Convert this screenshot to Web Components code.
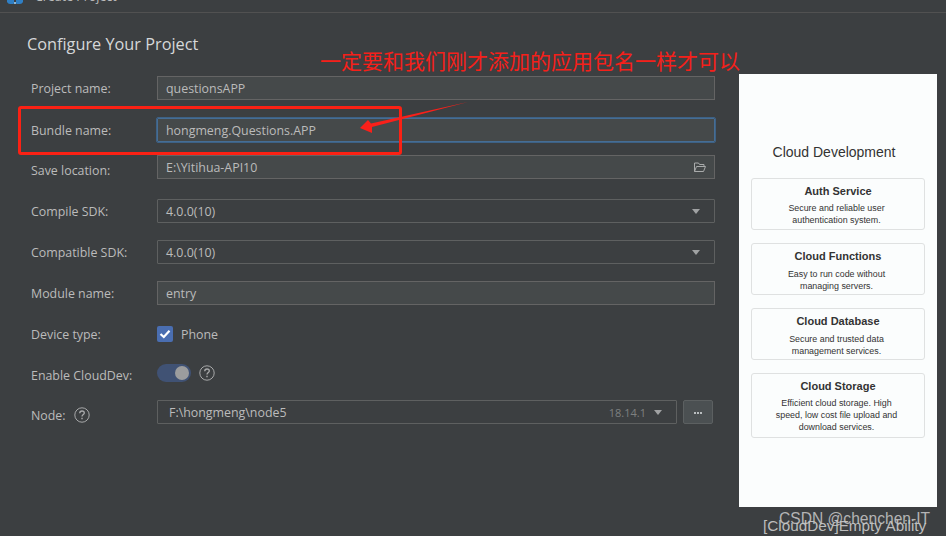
<!DOCTYPE html>
<html>
<head>
<meta charset="utf-8">
<title>Create Project</title>
<style>
  html, body { margin: 0; height: 100%; }
  body {
    width: 946px;
    height: 536px;
    overflow: hidden;
    background: #3c3f41;
    position: relative;
    font-family: "Open Sans", "Noto Sans", sans-serif;
    color: #bbbbbb;
  }
</style>
</head>
<body>
<project-dialog>
  <config-row label="Project name:" top="0"><config-field>questionsAPP</config-field></config-row>
  <config-row label="Bundle name:" top="18"><config-field focused>hongmeng.Questions.APP</config-field></config-row>
  <config-row label="Save location:" top="13" drop="6"><config-field>E:\Yitihua-API10<folder-icon slot="end"></folder-icon></config-field></config-row>
  <config-row label="Compile SDK:" top="20"><config-select>4.0.0(10)</config-select></config-row>
  <config-row label="Compatible SDK:" top="17"><config-select>4.0.0(10)</config-select></config-row>
  <config-row label="Module name:" top="17"><config-field>entry</config-field></config-row>
  <config-row label="Device type:" top="17"><config-check>Phone</config-check></config-row>
  <config-row label="Enable CloudDev:" top="15" drop="4"><config-toggle></config-toggle><help-icon style="margin-left:8px"></help-icon></config-row>
  <config-row label="Node:" top="15" drop="6" help>
    <config-select inset>F:\hongmeng\node5<span slot="end">18.14.1</span></config-select>
    <more-button></more-button>
  </config-row>
  <cloud-preview slot="side" title="Cloud Development" caption="[CloudDev]Empty Ability">
    <cloud-card name="Auth Service">Secure and reliable user<br>authentication system.</cloud-card>
    <cloud-card name="Cloud Functions" style="--desc-gap:5px">Easy to run code without<br>managing servers.</cloud-card>
    <cloud-card name="Cloud Database" style="--desc-gap:5px">Secure and trusted data<br>management services.</cloud-card>
    <cloud-card name="Cloud Storage" style="min-height:65px">Efficient cloud storage. High<br>speed, low cost file upload and<br>download services.</cloud-card>
  </cloud-preview>
</project-dialog>
<red-annotation></red-annotation>

<script>
class ProjectDialog extends HTMLElement {
  constructor() {
    super();
    this.attachShadow({ mode: 'open' });
    this.shadowRoot.innerHTML = `
      <style>
        :host { display: block; height: 536px; overflow: hidden; }
        .bar {
          height: 12px;
          border-bottom: 1px solid #515151;
          display: flex;
          align-items: flex-end;
          gap: 12px;
          padding-left: 7px;
          overflow: hidden;
          font-size: 12.4px;
          line-height: 18px;
        }
        .bar span { flex: none; transform: translateY(-6px); }
        .bar svg { flex: none; transform: translateY(-8px); }
        .main { display: flex; align-items: flex-start; }
        .form { width: 739px; flex: none; padding: 20px 0 0 27px; box-sizing: border-box; }
        h1 {
          margin: 0 0 20px;
          font-size: 16.3px;
          line-height: 23px;
          font-weight: 400;
          color: #d6d8d9;
        }
        .rows { padding-left: 4px; }
        .side { flex: none; margin-top: 61px; }
      </style>
      <div class="bar">
        <svg width="16" height="4" viewBox="0 0 16 4">
          <path d="M0 0 H7 V3 Q7 4 6 4 H3 Q1 4 0 2Z" fill="#2f7fc4"/>
          <path d="M9 0 H16 V2 Q15 4 13 4 H10 Q9 4 9 3Z" fill="#2f7fc4"/>
          <path d="M7 2 H9 V4 H7Z" fill="#8fb8d8"/>
        </svg>
        <span>Create Project</span>
      </div>
      <div class="main">
        <div class="form">
          <h1>Configure Your Project</h1>
          <div class="rows"><slot></slot></div>
        </div>
        <div class="side"><slot name="side"></slot></div>
      </div>`;
  }
}

class ConfigRow extends HTMLElement {
  constructor() {
    super();
    this.attachShadow({ mode: 'open' });
  }
  connectedCallback() {
    const help = this.hasAttribute('help') ? '<help-icon></help-icon>' : '';
    this.style.marginTop = (this.getAttribute('top') || 0) + 'px';
    // drop pushes the label down a little, the reference labels don't all sit on the field centre
    const drop = this.getAttribute('drop') || 0;
    this.shadowRoot.innerHTML = `
      <style>
        :host { display: flex; align-items: center; height: 24px; font-size: 12.4px; }
        .label {
          width: 126px;
          flex: none;
          display: flex;
          align-items: center;
          gap: 8px;
          padding-top: ${drop}px;
          color: #bbbbbb;
          white-space: nowrap;
        }
        .control { display: flex; align-items: center; width: 558px; }
        ::slotted(config-field), ::slotted(config-select) { flex: 1; }
      </style>
      <div class="label">${this.getAttribute('label')}${help}</div>
      <div class="control"><slot></slot></div>`;
  }
}

class ConfigField extends HTMLElement {
  constructor() {
    super();
    this.attachShadow({ mode: 'open' });
    this.shadowRoot.innerHTML = `
      <style>
        :host {
          display: flex;
          align-items: center;
          height: 24px;
          box-sizing: border-box;
          padding: 0 8px;
          background: #45494a;
          border: 1px solid #646464;
          font-size: 12.4px;
          color: #bbbbbb;
        }
        :host([focused]) {
          border-color: #466d94;
          outline: 1px solid #3d6185;
          outline-offset: 0;
          border-radius: 1px;
        }
        .text { flex: 1; }
      </style>
      <span class="text"><slot></slot></span><slot name="end"></slot>`;
  }
}

class ConfigSelect extends HTMLElement {
  constructor() {
    super();
    this.attachShadow({ mode: 'open' });
    this.shadowRoot.innerHTML = `
      <style>
        :host {
          display: flex;
          align-items: center;
          height: 24px;
          box-sizing: border-box;
          padding: 0 14px 0 8px;
          border: 1px solid #5e6060;
          border-radius: 1px;
          font-size: 12.4px;
          color: #bbbbbb;
        }
        :host([inset]) { padding-left: 11px; }
        .text { flex: 1; }
        .end { color: #7e8080; font-size: 11px; margin-right: 8px; }
        svg { flex: none; }
      </style>
      <span class="text"><slot></slot></span>
      <span class="end"><slot name="end"></slot></span>
      <svg width="8" height="5" viewBox="0 0 8 5"><path d="M0 0H8L4 5Z" fill="#a0a2a3"/></svg>`;
  }
}

class ConfigCheck extends HTMLElement {
  constructor() {
    super();
    this.attachShadow({ mode: 'open' });
    this.shadowRoot.innerHTML = `
      <style>
        :host { display: flex; align-items: center; gap: 8px; font-size: 12.4px; color: #bbbbbb; }
        .box { width: 16px; height: 16px; border-radius: 2px; background: #4a6eb1; display: flex; }
      </style>
      <span class="box">
        <svg width="16" height="16" viewBox="0 0 16 16"><path d="M3.5 8 L6.8 11 L12.5 4.8" fill="none" stroke="#fff" stroke-width="2.2"/></svg>
      </span>
      <span><slot></slot></span>`;
  }
}

class ConfigToggle extends HTMLElement {
  constructor() {
    super();
    this.attachShadow({ mode: 'open' });
    this.shadowRoot.innerHTML = `
      <style>
        :host {
          display: flex;
          align-items: center;
          justify-content: flex-end;
          width: 34px;
          height: 18px;
          box-sizing: border-box;
          padding-right: 2px;
          border-radius: 9px;
          background: #405274;
        }
        i { width: 14px; height: 14px; border-radius: 50%; background: #9c9d9e; }
      </style>
      <i></i>`;
  }
}

class HelpIcon extends HTMLElement {
  constructor() {
    super();
    this.attachShadow({ mode: 'open' });
    this.shadowRoot.innerHTML = `
      <style>
        :host { display: inline-flex; width: 16px; height: 16px; flex: none; }
      </style>
      <svg width="16" height="16" viewBox="0 0 16 16" fill="none" stroke="#a8a9aa">
        <circle cx="8" cy="8" r="7.2"/>
        <path d="M5.7 6.2 C5.8 4.6 7 4 8 4 C9.3 4 10.3 4.8 10.3 6 C10.3 7.5 8 7.6 8 9.6" stroke-width="1.3"/>
        <path d="M8 10.8 V12.2" stroke-width="1.4"/>
      </svg>`;
  }
}

class FolderIcon extends HTMLElement {
  constructor() {
    super();
    this.attachShadow({ mode: 'open' });
    this.shadowRoot.innerHTML = `
      <style>:host { display: inline-flex; width: 12px; height: 11px; }</style>
      <svg width="12" height="11" viewBox="0 0 12 11" fill="none" stroke="#a9abab">
        <path d="M.5 9.5 V1 H4.5 L5.5 2.5 H10 V4"/>
        <path d="M.5 9.5 H9.5 L11.5 4.5 H2.5 L.5 9.5Z"/>
      </svg>`;
  }
}

class MoreButton extends HTMLElement {
  constructor() {
    super();
    this.attachShadow({ mode: 'open' });
    this.shadowRoot.innerHTML = `
      <style>
        :host {
          display: flex;
          align-items: center;
          justify-content: center;
          flex: none;
          width: 30px;
          height: 24px;
          margin: 0 2px 0 6px;
          box-sizing: border-box;
          background: #4b5052;
          border: 1px solid #5c6061;
          border-radius: 2px;
        }
        svg { display: block; transform: translateY(1px); }
      </style>
      <svg width="8" height="2" viewBox="0 0 8 2" fill="#b9bdbf"><rect width="2" height="2"/><rect x="3" width="2" height="2"/><rect x="6" width="2" height="2"/></svg>`;
  }
}

class CloudPreview extends HTMLElement {
  constructor() {
    super();
    this.attachShadow({ mode: 'open' });
  }
  connectedCallback() {
    this.shadowRoot.innerHTML = `
      <style>
        :host { display: block; width: 198px; font-family: "Liberation Sans", Arial, sans-serif; }
        .panel {
          height: 433px;
          box-sizing: border-box;
          background: #fbfdfd;
          padding: 70px 12px 0;
          display: flex;
          flex-direction: column;
        }
        h2 {
          margin: 0 0 17px -8px;
          width: 182px;
          font-size: 14px;
          line-height: 17px;
          font-weight: 400;
          text-align: center;
          color: #333;
        }
        .cards { display: flex; flex-direction: column; gap: 13px; }
        .caption {
          margin-top: 10px;
          padding-left: 24px;
          font-size: 15.3px;
          line-height: 17px;
          color: #bdbdbd;
          white-space: nowrap;
        }
      </style>
      <div class="panel">
        <h2>${this.getAttribute('title')}</h2>
        <div class="cards"><slot></slot></div>
      </div>
      <div class="caption">${this.getAttribute('caption')}</div>`;
  }
}

class CloudCard extends HTMLElement {
  constructor() {
    super();
    this.attachShadow({ mode: 'open' });
  }
  connectedCallback() {
    this.shadowRoot.innerHTML = `
      <style>
        :host {
          display: block;
          width: 174px;
          min-height: 52px;
          box-sizing: border-box;
          padding: 5px 4px 0;
          border: 1px solid #dfe1e1;
          border-radius: 3px;
          text-align: center;
          color: #333;
        }
        b { display: block; font-size: 11px; line-height: 14px; margin-bottom: var(--desc-gap, 4px); }
        p { margin: 0; padding-right: 3px; font-size: 8.9px; line-height: 12px; }
      </style>
      <b>${this.getAttribute('name')}</b>
      <p><slot></slot></p>`;
  }
}

// annotations drawn over the screenshot, so these stay absolute
class RedAnnotation extends HTMLElement {
  constructor() {
    super();
    this.attachShadow({ mode: 'open' });
    this.shadowRoot.innerHTML = `
      <style>
        :host { position: absolute; left: 0; top: 0; width: 946px; height: 536px; pointer-events: none; }
        .note {
          position: absolute;
          left: 320px;
          top: 46px;
          font: 21px/28px "Noto Sans CJK SC", sans-serif;
          color: #f5201a;
          white-space: nowrap;
        }
        .box {
          position: absolute;
          left: 18px;
          top: 106px;
          width: 378px;
          height: 43px;
          border: 3px solid #fb2114;
          border-radius: 3px;
        }
        svg { position: absolute; left: 0; top: 0; }
        .mark {
          position: absolute;
          left: 779px;
          top: 509px;
          font: 15.6px/20px "Liberation Sans", Arial, sans-serif;
          color: #c9c9c9;
          opacity: .85;
          white-space: nowrap;
        }
      </style>
      <div class="note">一定要和我们刚才添加的应用包名一样才可以</div>
      <div class="box"></div>
      <svg width="946" height="536">
        <path d="M360 128 L368 120 L371 123.5 L468 102 L372 127 L372 133Z" fill="#f9201a"/>
      </svg>
      <div class="mark">CSDN @chenchen-IT</div>`;
  }
}

customElements.define('project-dialog', ProjectDialog);
customElements.define('config-row', ConfigRow);
customElements.define('config-field', ConfigField);
customElements.define('config-select', ConfigSelect);
customElements.define('config-check', ConfigCheck);
customElements.define('config-toggle', ConfigToggle);
customElements.define('help-icon', HelpIcon);
customElements.define('folder-icon', FolderIcon);
customElements.define('more-button', MoreButton);
customElements.define('cloud-preview', CloudPreview);
customElements.define('cloud-card', CloudCard);
customElements.define('red-annotation', RedAnnotation);
</script>
</body>
</html>
